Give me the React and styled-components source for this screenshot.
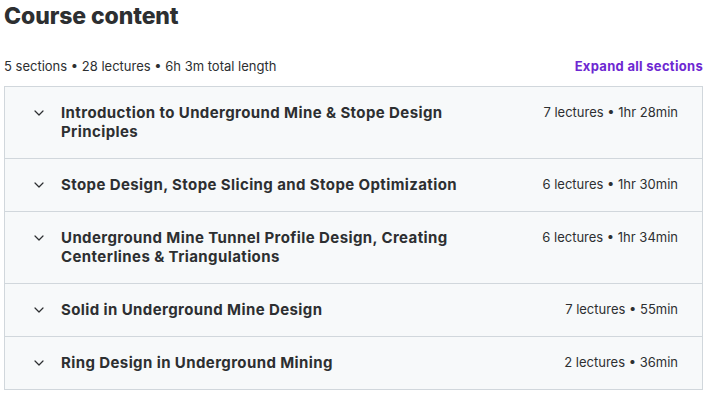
import React from "react";
import styled, { createGlobalStyle } from "styled-components";

const sections = [
  { title: "Introduction to Underground Mine & Stope Design Principles", meta: "7 lectures • 1hr 28min" },
  { title: "Stope Design, Stope Slicing and Stope Optimization", meta: "6 lectures • 1hr 30min" },
  { title: "Underground Mine Tunnel Profile Design, Creating Centerlines & Triangulations", meta: "6 lectures • 1hr 34min" },
  { title: "Solid in Underground Mine Design", meta: "7 lectures • 55min" },
  { title: "Ring Design in Underground Mining", meta: "2 lectures • 36min" },
];

const GlobalStyle = createGlobalStyle`
  body {
    margin: 0;
    background: #ffffff;
    font-family: Inter, "Liberation Sans", sans-serif;
    color: #2d2f31;
  }
`;

const Chevron = () => (
  <svg width="10" height="6" viewBox="0 0 10 6" fill="none">
    <path d="M1 1l4 4 4-4" stroke="#2d2f31" strokeWidth="1.2" strokeLinecap="round" strokeLinejoin="round" />
  </svg>
);

const App = () => {
  return (
    <>
      <GlobalStyle />
      <StyledCurriculum>
        <h2>Course content</h2>
        <div className="summary">
          <span>5 sections • 28 lectures • 6h 3m total length</span>
          <button>Expand all sections</button>
        </div>
        <div className="sections">
          {sections.map((s) => (
            <Section key={s.title}>
              <div className="icon">
                <Chevron />
              </div>
              <div className="title">{s.title}</div>
              <div className="meta">{s.meta}</div>
            </Section>
          ))}
        </div>
      </StyledCurriculum>
    </>
  );
};

const StyledCurriculum = styled.div`
  padding: 0 5px 0 4px;

  h2 {
    margin: 0;
    padding-top: 2px;
    font-size: 23px;
    line-height: 29px;
    font-weight: 800;
    letter-spacing: -0.1px;
  }

  .summary {
    margin-top: 25px;
    height: 20px;
    display: flex;
    align-items: center;
    justify-content: space-between;
    font-size: 13px;

    button {
      border: none;
      background: none;
      padding: 0;
      font-family: inherit;
      font-size: 13px;
      letter-spacing: 0.3px;
      font-weight: 700;
      color: #6d28d2;
      cursor: pointer;
    }
  }

  .sections {
    margin-top: 10px;
    border: 1px solid #d1d7dc;
    border-bottom: none;
  }
`;

const Section = styled.div`
  display: flex;
  align-items: flex-start;
  padding: 16px 24px 17px 28px;
  background: #f7f9fa;
  border-bottom: 1px solid #d1d7dc;

  .icon {
    width: 12px;
    height: 19px;
    display: flex;
    align-items: center;
    justify-content: center;
    flex-shrink: 0;
    margin-right: 16px;
  }

  .title {
    flex: 1;
    font-size: 15px;
    line-height: 19px;
    letter-spacing: 0.4px;
    font-weight: 700;
    max-width: 410px;
  }

  .meta {
    margin-left: auto;
    font-size: 13px;
    line-height: 19px;
    white-space: nowrap;
    color: #2d2f31;
  }
`;

export default App;
